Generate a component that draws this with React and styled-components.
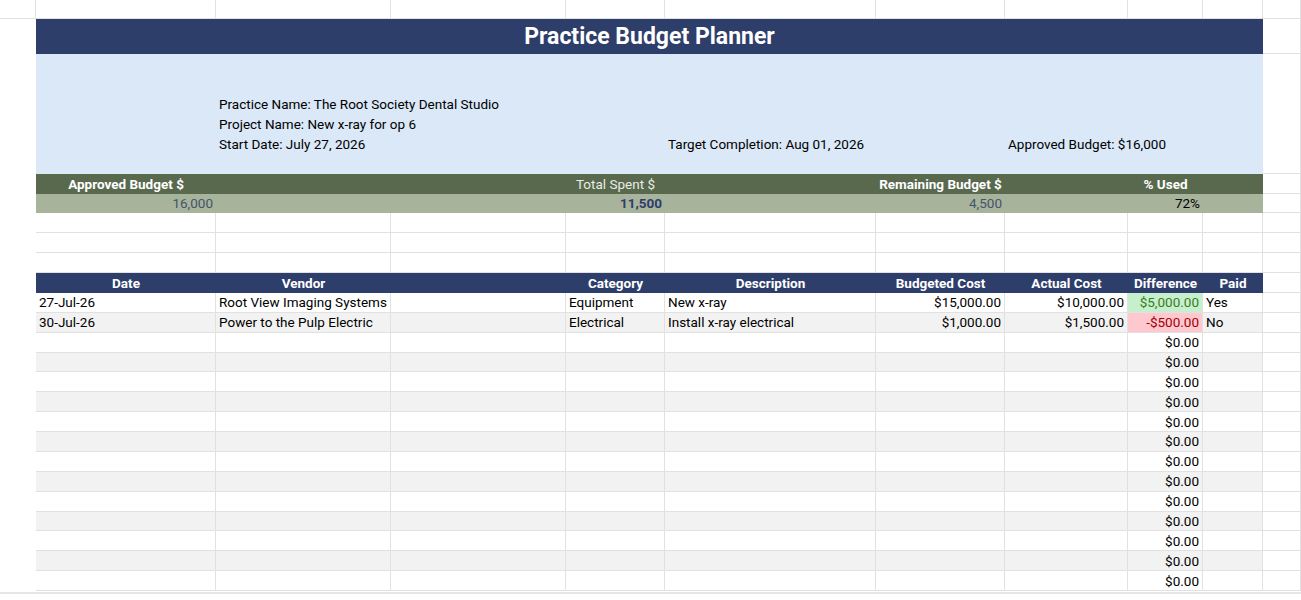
import React from "react";
import styled, { createGlobalStyle, css } from "styled-components";

const Global = createGlobalStyle`
  html, body { margin: 0; padding: 0; background: #fff; }
  body { font-family: Roboto, "Liberation Sans", sans-serif; font-size: 13.5px; color: #000; overflow: hidden; }
`;

const COLS = "36px 180px 175px 175px 99px 211px 129px 123px 75px 60px 38px";
const LINE = "#E1E1E1";

const Sheet = styled.div`
  width: 1301px;
  height: 600px;
  overflow: hidden;
  display: flex;
  flex-direction: column;
`;

const Row = styled.div`
  display: grid;
  grid-template-columns: ${COLS};
  height: ${(p) => p.$h || 20}px;
`;

const Cell = styled.div`
  box-sizing: border-box;
  border-right: 1px solid ${LINE};
  border-bottom: 1px solid ${LINE};
  display: flex;
  align-items: center;
  padding: 0 3px;
  white-space: nowrap;
  overflow: visible;
  justify-content: ${(p) => (p.$align === "right" ? "flex-end" : p.$align === "center" ? "center" : "flex-start")};
  background: ${(p) => p.$bg || "transparent"};
  color: ${(p) => p.$color || "#000"};
  font-weight: ${(p) => (p.$bold ? 700 : 400)};
  ${(p) => p.$span && css`grid-column: span ${p.$span};`}
  ${(p) => p.$plain && css`border-right-color: transparent; border-bottom-color: transparent;`}
  ${(p) => p.$noLeftCol && css`border-right-color: ${LINE};`}
`;

const TitleBar = styled.div`
  grid-column: 2 / span 9;
  background: #2E3E6B;
  color: #fff;
  font-weight: 700;
  font-size: 23px;
  display: flex;
  align-items: center;
  justify-content: center;
`;

const InfoBand = styled.div`
  grid-column: 2 / span 9;
  background: #DAE8F7;
  display: grid;
  grid-template-columns: 180px 449px 340px 258px;
  grid-template-rows: repeat(6, 20px);
`;

const InfoText = styled.div`
  grid-column: ${(p) => p.$col};
  grid-row: ${(p) => p.$row};
  display: flex;
  align-items: center;
  padding-left: 3px;
  white-space: nowrap;
`;

const Band = styled.div`
  grid-column: 2 / span 9;
  display: grid;
  grid-template-columns: 180px 175px 175px 99px 211px 129px 123px 75px 60px;
  background: ${(p) => p.$bg};
  color: ${(p) => p.$color || "#000"};
  font-weight: ${(p) => (p.$bold ? 700 : 400)};
`;

const BandCell = styled.div`
  display: flex;
  align-items: center;
  padding: 0 3px;
  white-space: nowrap;
  justify-content: ${(p) => (p.$align === "right" ? "flex-end" : p.$align === "left" ? "flex-start" : "center")};
  color: ${(p) => p.$color || "inherit"};
  font-weight: ${(p) => (p.$bold ? 700 : "inherit")};
`;

const BottomBar = styled.div`
  height: 6px;
  border-top: 2px solid #E6E6E6;
  margin-top: 1px;
`;

const blank = (n) => Array.from({ length: n }, (_, i) => <Cell key={"b" + i} />);

const data = [
  { date: "27-Jul-26", vendor: "Root View Imaging Systems", cat: "Equipment", desc: "New x-ray", bud: "$15,000.00", act: "$10,000.00", diff: "$5,000.00", paid: "Yes", tone: "pos" },
  { date: "30-Jul-26", vendor: "Power to the Pulp Electric", cat: "Electrical", desc: "Install x-ray electrical", bud: "$1,000.00", act: "$1,500.00", diff: "-$500.00", paid: "No", tone: "neg" },
  ...Array.from({ length: 13 }, () => ({ diff: "$0.00" })),
];

export default function App() {
  return (
    <>
      <Global />
      <Sheet>
        <Row $h={19}>
          <Cell />
          {blank(10)}
        </Row>
        <Row $h={35}>
          <Cell $plain />
          <TitleBar>Practice Budget Planner</TitleBar>
          <Cell />
        </Row>
        <Row $h={120}>
          <Cell $plain />
          <InfoBand>
            <InfoText $col={2} $row={3}>Practice Name: The Root Society Dental Studio</InfoText>
            <InfoText $col={2} $row={4}>Project Name: New x-ray for op 6</InfoText>
            <InfoText $col={2} $row={5}>Start Date: July 27, 2026</InfoText>
            <InfoText $col={3} $row={5}>Target Completion: Aug 01, 2026</InfoText>
            <InfoText $col={4} $row={5}>Approved Budget: $16,000</InfoText>
          </InfoBand>
          <Cell />
        </Row>
        <Row>
          <Cell $plain />
          <Band $bg="#59694E" $color="#fff" $bold>
            <BandCell>Approved Budget $</BandCell>
            <BandCell /><BandCell />
            <BandCell style={{ fontWeight: 400 }} $color="#E8ECE4">Total Spent $</BandCell>
            <BandCell />
            <BandCell>Remaining Budget $</BandCell>
            <BandCell />
            <BandCell>% Used</BandCell>
            <BandCell />
          </Band>
          <Cell />
        </Row>
        <Row>
          <Cell $plain />
          <Band $bg="#A8B39C">
            <BandCell $align="right" $color="#44546A">16,000</BandCell>
            <BandCell /><BandCell />
            <BandCell $align="right" $color="#2E3E6B" $bold>11,500</BandCell>
            <BandCell />
            <BandCell $align="right" $color="#44546A">4,500</BandCell>
            <BandCell />
            <BandCell $align="right">72%</BandCell>
            <BandCell />
          </Band>
          <Cell />
        </Row>
        {[0, 1, 2].map((r) => (
          <Row key={r}>
            <Cell $plain />
            {blank(10)}
          </Row>
        ))}
        <Row>
          <Cell $plain />
          <Band $bg="#2E3E6B" $color="#fff" $bold>
            <BandCell>Date</BandCell>
            <BandCell>Vendor</BandCell>
            <BandCell />
            <BandCell>Category</BandCell>
            <BandCell>Description</BandCell>
            <BandCell>Budgeted Cost</BandCell>
            <BandCell>Actual Cost</BandCell>
            <BandCell>Difference</BandCell>
            <BandCell>Paid</BandCell>
          </Band>
          <Cell />
        </Row>
        {data.map((d, i) => {
          const bg = i % 2 ? "#F2F2F2" : "#fff";
          const diffBg = d.tone === "pos" ? "#C6EFCE" : d.tone === "neg" ? "#FFC7CE" : bg;
          const diffColor = d.tone === "pos" ? "#3A7D22" : d.tone === "neg" ? "#9C0006" : "#000";
          return (
            <Row key={i}>
              <Cell $plain />
              <Cell $bg={bg}>{d.date}</Cell>
              <Cell $bg={bg}>{d.vendor}</Cell>
              <Cell $bg={bg} />
              <Cell $bg={bg}>{d.cat}</Cell>
              <Cell $bg={bg}>{d.desc}</Cell>
              <Cell $bg={bg} $align="right">{d.bud}</Cell>
              <Cell $bg={bg} $align="right">{d.act}</Cell>
              <Cell $bg={diffBg} $color={diffColor} $align="right">{d.diff}</Cell>
              <Cell $bg={bg}>{d.paid}</Cell>
              <Cell />
            </Row>
          );
        })}
        <BottomBar />
      </Sheet>
    </>
  );
}
